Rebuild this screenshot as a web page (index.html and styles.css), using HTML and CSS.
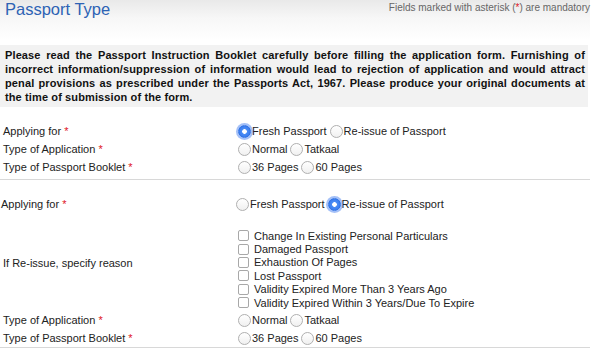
FILE: index.html
```html
<!DOCTYPE html>
<html>
<head>
<meta charset="utf-8">
<link rel="stylesheet" href="styles.css">
</head>
<body>
<div class="page">
  <div class="header">
    <h1 class="title">Passport Type</h1>
    <div class="mandatory">Fields marked with asterisk (<span class="req">*</span>) are mandatory</div>
  </div>
  <div class="notice">Please read the Passport Instruction Booklet carefully before filling the application form. Furnishing of incorrect information/suppression of information would lead to rejection of application and would attract penal provisions as prescribed under the Passports Act, 1967. Please produce your original documents at the time of submission of the form.</div>

  <div class="section first">
    <div class="row">
      <div class="label">Applying for <span class="req">*</span></div>
      <div class="options">
        <label class="opt"><span class="radio checked"></span>Fresh Passport</label>
        <label class="opt"><span class="radio"></span>Re-issue of Passport</label>
      </div>
    </div>
    <div class="row">
      <div class="label">Type of Application <span class="req">*</span></div>
      <div class="options">
        <label class="opt"><span class="radio"></span>Normal</label>
        <label class="opt"><span class="radio"></span>Tatkaal</label>
      </div>
    </div>
    <div class="row">
      <div class="label">Type of Passport Booklet <span class="req">*</span></div>
      <div class="options">
        <label class="opt"><span class="radio"></span>36 Pages</label>
        <label class="opt"><span class="radio"></span>60 Pages</label>
      </div>
    </div>
  </div>

  <div class="section second">
    <div class="row">
      <div class="label shift">Applying for <span class="req">*</span></div>
      <div class="options shift">
        <label class="opt"><span class="radio"></span>Fresh Passport</label>
        <label class="opt"><span class="radio checked"></span>Re-issue of Passport</label>
      </div>
    </div>
    <div class="row reasons">
      <div class="label reason-label">If Re-issue, specify reason</div>
      <div class="checklist">
        <label class="chk"><span class="box"></span>Change In Existing Personal Particulars</label>
        <label class="chk"><span class="box"></span>Damaged Passport</label>
        <label class="chk"><span class="box"></span>Exhaustion Of Pages</label>
        <label class="chk"><span class="box"></span>Lost Passport</label>
        <label class="chk"><span class="box"></span>Validity Expired More Than 3 Years Ago</label>
        <label class="chk"><span class="box"></span>Validity Expired Within 3 Years/Due To Expire</label>
      </div>
    </div>
    <div class="row">
      <div class="label">Type of Application <span class="req">*</span></div>
      <div class="options">
        <label class="opt"><span class="radio"></span>Normal</label>
        <label class="opt"><span class="radio"></span>Tatkaal</label>
      </div>
    </div>
    <div class="row">
      <div class="label">Type of Passport Booklet <span class="req">*</span></div>
      <div class="options">
        <label class="opt"><span class="radio"></span>36 Pages</label>
        <label class="opt"><span class="radio"></span>60 Pages</label>
      </div>
    </div>
  </div>
</div>
</body>
</html>
```

FILE: styles.css
```css
html, body {
  margin: 0;
  padding: 0;
  background: #fff;
}
body {
  font-family: "Liberation Sans", Arial, sans-serif;
  color: #222;
  overflow: hidden;
}
.page {
  width: 590px;
}
.header {
  display: flex;
  justify-content: space-between;
  align-items: flex-start;
  height: 45px;
  background: linear-gradient(to bottom, #e9e9e9 0px, #f7f7f7 18px, #ffffff 40px);
}
.title {
  margin: 0;
  padding: 0 0 0 5px;
  font-size: 16.5px;
  line-height: 18px;
  font-weight: normal;
  color: #2d62b4;
}
.mandatory {
  font-size: 10px;
  line-height: 14px;
  color: #666;
  padding-top: 1px;
}
.req {
  color: #e0141e;
}
.notice {
  width: 580px;
  background: #f2f2f2;
  padding: 3px 3px 3px 5px;
  font-size: 11px;
  line-height: 14px;
  letter-spacing: 0.12px;
  font-weight: bold;
  color: #111;
  text-align: justify;
}
.section {
  border-bottom: 1px solid #d8d8d8;
  padding-bottom: 3px;
}
.section.first {
  padding-top: 15px;
}
.section.second {
  padding-top: 15px;
  padding-bottom: 0;
}
.row {
  display: grid;
  grid-template-columns: 238px 1fr;
  align-items: center;
  min-height: 18px;
}
.label {
  font-size: 11px;
  padding-left: 3px;
  color: #222;
}
.label.shift {
  padding-left: 1px;
}
.options {
  display: flex;
  align-items: center;
  gap: 3px;
  font-size: 11px;
}
.options.shift {
  margin-left: -2px;
}
.opt {
  display: flex;
  align-items: center;
}
.radio {
  width: 11px;
  height: 11px;
  border: 1px solid #b0b0b0;
  border-radius: 50%;
  background: linear-gradient(#ffffff, #f0f0f0);
  margin-right: 1px;
  box-sizing: content-box;
  flex: none;
  position: relative;
}
.radio.checked {
  border-color: #2b6fe6;
  background: radial-gradient(circle, #ffffff 0px, #ffffff 2px, #4a8cf5 2.6px, #2c6fe8 100%);
  box-shadow: 0 0 0 2px rgba(90, 140, 240, 0.55);
}
.reasons {
  padding-top: 16px;
  padding-bottom: 2px;
}
.reason-label {
  align-self: center;
  padding-bottom: 12px;
}
.checklist {
  display: flex;
  flex-direction: column;
  font-size: 11px;
}
.chk {
  display: flex;
  align-items: center;
  height: 13.4px;
}
.box {
  width: 9px;
  height: 9px;
  border: 1px solid #a8a8a8;
  border-radius: 2px;
  background: #fff;
  margin-right: 5px;
  flex: none;
}
```
